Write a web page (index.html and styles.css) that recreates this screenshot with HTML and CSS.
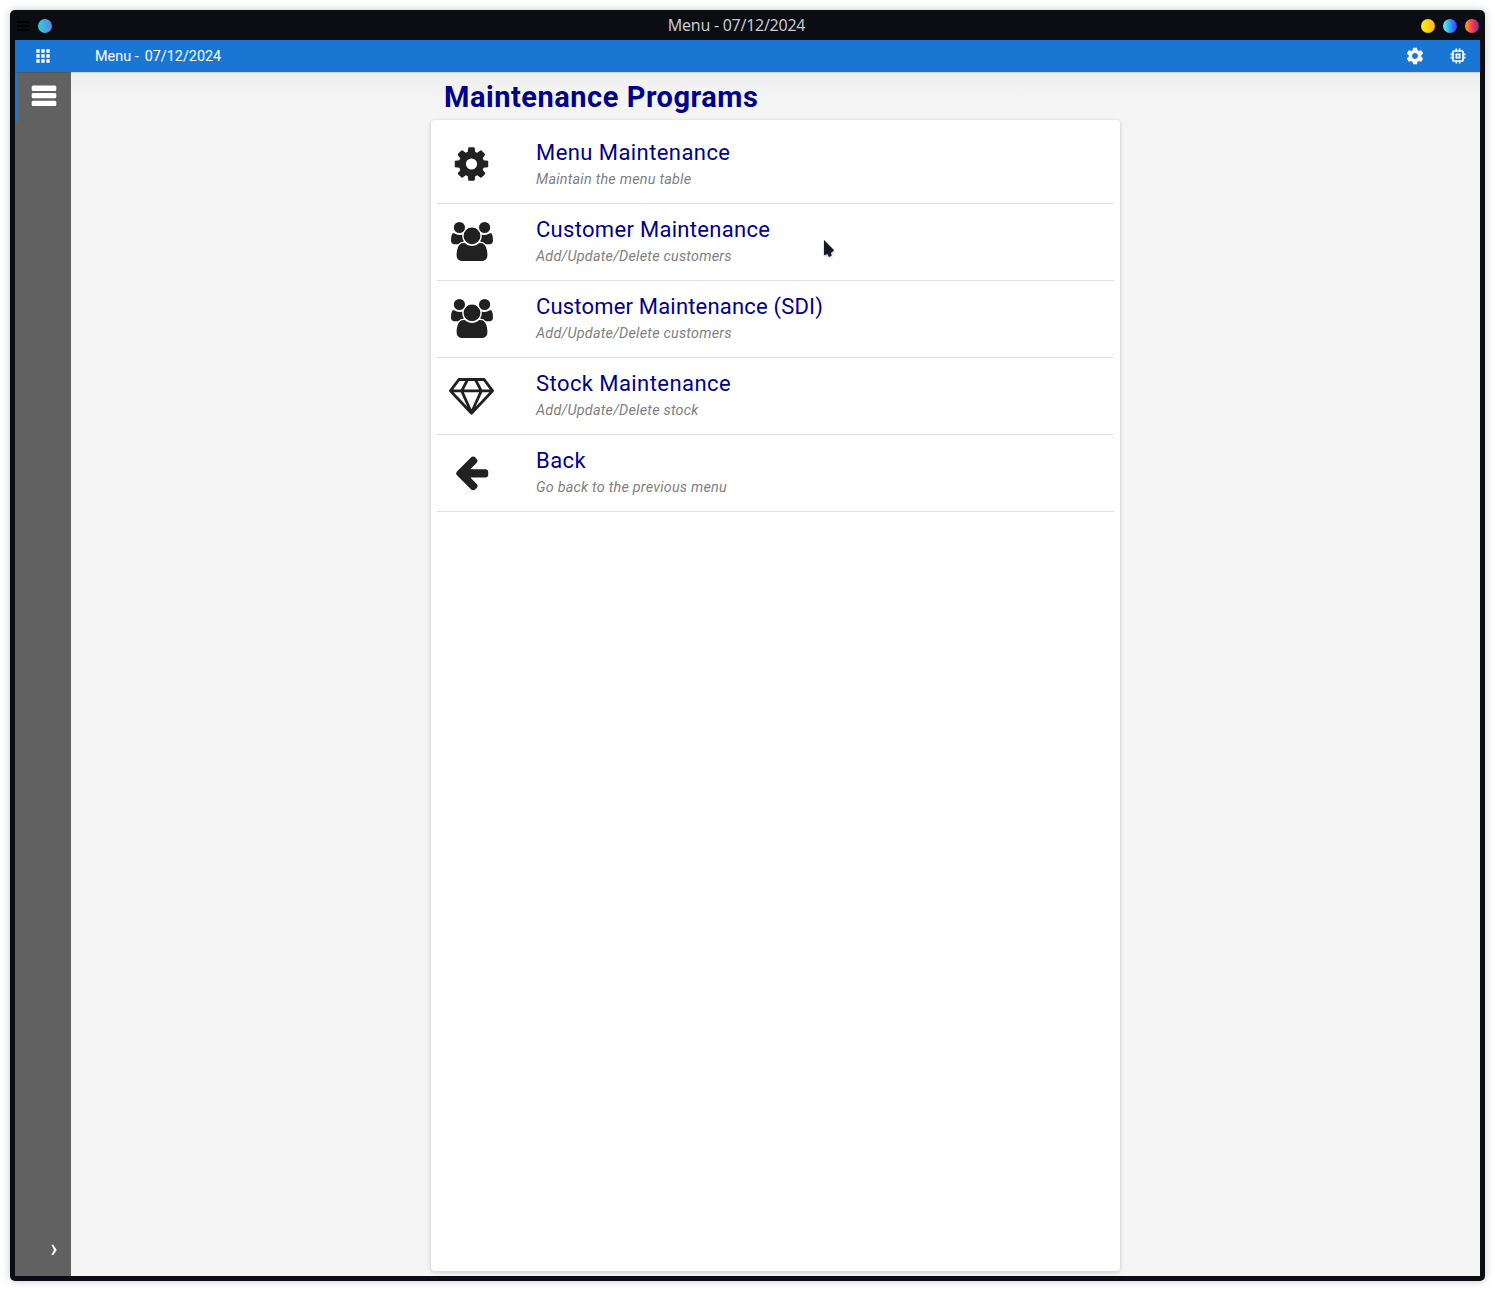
FILE: index.html
```html
<!DOCTYPE html>
<html lang="en">
<head>
<meta charset="utf-8">
<title>Menu - 07/12/2024</title>
<link rel="stylesheet" href="styles.css">
</head>
<body>
<svg class="sprite" aria-hidden="true">
  <symbol id="cog" viewBox="0 0 1792 1792"><path d="M1152 896q0-106-75-181t-181-75-181 75-75 181 75 181 181 75 181-75 75-181zm512-109v222q0 12-8 23t-20 13l-185 28q-19 54-39 91 35 50 107 138 10 12 10 25t-9 23q-27 37-99 108t-94 71q-12 0-26-9l-138-108q-44 23-91 38-16 136-29 186-7 28-36 28h-222q-14 0-24.500-8.500t-11.500-21.500l-28-184q-49-16-90-37l-141 107q-10 9-25 9-14 0-25-11-126-114-165-168-7-10-7-23 0-12 8-23 15-21 51-66.500t54-70.500q-27-50-41-99l-183-27q-13-2-21-12.500t-8-23.500v-222q0-12 8-23t19-13l186-28q14-46 39-92-40-57-107-138-10-12-10-24 0-10 9-23 26-36 98.500-107.500t94.500-71.500q13 0 26 10l138 107q44-23 91-38 16-136 29-186 7-28 36-28h222q14 0 24.500 8.500t11.500 21.500l28 184q49 16 90 37l142-107q9-9 24-9 13 0 25 10 129 119 165 170 7 8 7 22 0 12-8 23-15 21-51 66.500t-54 70.500q26 50 41 98l183 28q13 2 21 12.500t8 23.500z"/></symbol>
  <symbol id="users" viewBox="0 0 1920 1792"><path d="M593 896q-162 5-265 128h-134q-82 0-138-40.500t-56-118.500q0-353 124-353 6 0 43.500 21t97.500 42.500 119 21.500q67 0 133-23-5 37-5 66 0 139 81 256zm1071 637q0 120-73 189.500t-194 69.500h-874q-121 0-194-69.500t-73-189.500q0-53 3.500-103.500t14-109 26.500-108.500 43-97.500 62-81 85.500-53.500 111.500-20q10 0 43 21.500t73 48 107 48 135 21.500 135-21.500 107-48 73-48 43-21.500q61 0 111.500 20t85.500 53.500 62 81 43 97.500 26.500 108.500 14 109 3.500 103.500zm-1024-1277q0 106-75 181t-181 75-181-75-75-181 75-181 181-75 181 75 75 181zm704 384q0 159-112.500 271.500t-271.500 112.500-271.500-112.500-112.500-271.500 112.500-271.500 271.500-112.500 271.500 112.500 112.500 271.500zm576 225q0 78-56 118.500t-138 40.500h-134q-103-123-265-128 81-117 81-256 0-29-5-66 66 23 133 23 59 0 119-21.500t97.500-42.500 43.500-21q124 0 124 353zm-128-609q0 106-75 181t-181 75-181-75-75-181 75-181 181-75 181 75 75 181z"/></symbol>
  <symbol id="diamond" viewBox="0 0 2048 1792"><path d="M212 768l623 665-300-665zM1024 1540l349-772h-698zM538 640l204-384h-262l-288 384zM1213 1433l623-665h-323zM683 640h682l-204-384h-274zM1510 640h346l-288-384h-262zM1651 153l384 512q14 18 13 41.500t-17 40.500l-960 1024q-18 20-47 20t-47-20l-960-1024q-16-17-17-40.500t13-41.500l384-512q18-26 51-26h1152q33 0 51 26z"/></symbol>
  <symbol id="arrow-left" viewBox="0 0 1792 1792"><path d="M1664 896v128q0 53-32.500 90.500t-84.500 37.500h-704l293 294q38 36 38 90t-38 90l-75 76q-37 37-90 37-52 0-91-37l-651-652q-37-37-37-90 0-52 37-91l651-650q38-38 91-38 52 0 90 38l75 74q38 38 38 91t-38 91l-293 293h704q52 0 84.500 37.500t32.500 90.500z"/></symbol>
</svg>

<div class="window">
  <header class="titlebar">
    <div class="title-left">
      <svg class="burger" viewBox="0 0 12 10"><path d="M0 0h12v2H0zM0 4h12v2H0zM0 8h12v2H0z"/></svg>
      <span class="dot dot-app"></span>
    </div>
    <div class="window-title">Menu - 07/12/2024</div>
    <div class="title-right">
      <span class="dot dot-min"></span>
      <span class="dot dot-max"></span>
      <span class="dot dot-close"></span>
    </div>
  </header>

  <nav class="appbar">
    <svg class="app-icon apps" viewBox="0 0 24 24"><path d="M4 8h4V4H4v4zm6 12h4v-4h-4v4zm-6 0h4v-4H4v4zm0-6h4v-4H4v4zm6 0h4v-4h-4v4zm6-10v4h4V4h-4zm-6 4h4V4h-4v4zm6 6h4v-4h-4v4zm0 6h4v-4h-4v4z"/></svg>
    <span class="appbar-title"><span>Menu -</span><span>07/12/2024</span></span>
    <svg class="app-icon settings" viewBox="0 0 24 24"><path d="M19.430 12.980c.04-.32.07-.64.07-.98s-.03-.66-.07-.98l2.110-1.650c.19-.15.24-.42.12-.64l-2-3.460c-.12-.22-.39-.3-.61-.22l-2.490 1c-.52-.4-1.080-.73-1.690-.98l-.38-2.650C14.460 2.180 14.250 2 14 2h-4c-.25 0-.46.18-.49.42l-.38 2.650c-.61.25-1.170.59-1.690.98l-2.490-1c-.23-.09-.49 0-.61.22l-2 3.460c-.13.22-.07.49.12.64l2.110 1.650c-.04.32-.07.65-.07.98s.03.66.07.98l-2.110 1.650c-.19.15-.24.42-.12.64l2 3.460c.12.22.39.3.61.22l2.490-1c.52.4 1.080.73 1.690.98l.38 2.650c.03.24.24.42.49.42h4c.25 0 .46-.18.49-.42l.38-2.650c.61-.25 1.170-.59 1.690-.98l2.490 1c.23.09.49 0 .61-.22l2-3.460c.12-.22.07-.49-.12-.64l-2.110-1.650zM12 15.500c-1.930 0-3.500-1.570-3.500-3.500s1.570-3.500 3.500-3.500 3.500 1.570 3.500 3.500-1.570 3.500-3.500 3.500z"/></svg>
    <svg class="app-icon" viewBox="0 0 24 24"><path d="M15 9H9v6h6V9zm-2 4h-2v-2h2v2zm8-2V9h-2V7c0-1.100-.9-2-2-2h-2V3h-2v2h-2V3H9v2H7c-1.100 0-2 .9-2 2v2H3v2h2v2H3v2h2v2c0 1.100.9 2 2 2h2v2h2v-2h2v2h2v-2h2c1.100 0 2-.9 2-2v-2h2v-2h-2v-2h2zm-4 6H7V7h10v10z"/></svg>
  </nav>

  <div class="body">
    <aside class="sidebar">
      <div class="side-item">
        <svg class="bars" viewBox="0 0 26 22"><rect x="0.700" y="0.500" width="24.600" height="5.500" rx="1.500"/><rect x="0.700" y="8" width="24.600" height="5.300" rx="1.500"/><rect x="0.700" y="15.800" width="24.600" height="5.300" rx="1.500"/></svg>
      </div>
      <svg class="expand" viewBox="0 0 6 12"><path d="M.4.800h1.900L5.700 5.900 2.300 11H.4L3 5.900z"/></svg>
    </aside>

    <main class="content">
      <h1>Maintenance Programs</h1>
      <ul class="card">
        <li class="row">
          <span class="row-icon"><svg width="39" height="40"><use href="#cog"/></svg></span>
          <div class="row-text"><div class="name">Menu Maintenance</div><div class="desc">Maintain the menu table</div></div>
        </li>
        <li class="row">
          <span class="row-icon"><svg width="42" height="41"><use href="#users"/></svg></span>
          <div class="row-text"><div class="name name-long">Customer Maintenance</div><div class="desc">Add/Update/Delete customers</div></div>
        </li>
        <li class="row">
          <span class="row-icon"><svg width="42" height="41"><use href="#users"/></svg></span>
          <div class="row-text"><div class="name name-longest">Customer Maintenance (SDI)</div><div class="desc">Add/Update/Delete customers</div></div>
        </li>
        <li class="row">
          <span class="row-icon"><svg width="45" height="40"><use href="#diamond"/></svg></span>
          <div class="row-text"><div class="name">Stock Maintenance</div><div class="desc">Add/Update/Delete stock</div></div>
        </li>
        <li class="row">
          <span class="row-icon"><svg width="39" height="40"><use href="#arrow-left"/></svg></span>
          <div class="row-text"><div class="name">Back</div><div class="desc">Go back to the previous menu</div></div>
        </li>
      </ul>
    </main>
  </div>
</div>
<svg class="cursor" viewBox="0 0 12 20"><path d="M1 1L11.200 11.200 7.800 14 8.800 16.600 6 18 4.500 15 1 16.300z"/></svg>
</body>
</html>
```
FILE: styles.css
```css
* { box-sizing: border-box; }
body {
  margin: 0;
  height: 1291px;
  padding: 10px;
  background: #fff;
  font-family: Roboto, "Liberation Sans", sans-serif;
  overflow: hidden;
}
.sprite { display: none; }
.window {
  display: flex;
  flex-direction: column;
  width: 1475px;
  height: 1271px;
  padding: 0 5px 5px;
  border-radius: 5px;
  background: #0c0d13;
  box-shadow: 0 0 8px rgba(0, 0, 0, .22);
}
.titlebar {
  display: grid;
  grid-template-columns: 1fr auto 1fr;
  align-items: center;
  flex: none;
  height: 30px;
}
.title-left, .title-right { display: flex; align-items: center; gap: 8px; padding-top: 2px; }
.title-left { padding-left: 2px; gap: 9px; }
.title-right { justify-content: flex-end; padding-right: 1px; }
.burger { width: 12px; height: 10px; fill: #020203; }
.dot { width: 14px; height: 14px; border-radius: 50%; }
.dot-app { background: linear-gradient(90deg, #35c9dc, #5b86e5); }
.dot-min { background: linear-gradient(90deg, #f9ee0a, #fbb034); }
.dot-max { background: linear-gradient(90deg, #72efdd, #2ba6ff 50%, #4a2cf5); }
.dot-close { background: linear-gradient(90deg, #fda52b, #f83d55 50%, #78339b); }
.window-title {
  font: 16px/30px "Noto Sans", sans-serif;
  letter-spacing: -.27px;
  color: #c5c8d0;
  margin-right: 22px;
  white-space: nowrap;
}
.appbar {
  position: relative;
  z-index: 1;
  display: flex;
  align-items: center;
  flex: none;
  height: 32px;
  padding: 0 11.6px 0 18px;
  background: #1976d2;
  color: #fff;
  box-shadow: 0 1px 1px rgba(0, 0, 0, .1);
}
.app-icon { width: 20px; height: 20px; fill: #fff; }
.settings { margin-left: auto; margin-right: 23px; }
.appbar-title { display: flex; gap: 6px; margin-left: 42px; font-size: 14.4px; white-space: nowrap; }
.body { display: flex; flex: 1; min-height: 0; }
.sidebar {
  display: flex;
  flex-direction: column;
  justify-content: space-between;
  width: 56px;
  background: #616161;
}
.side-item { height: 50px; border-left: 3px solid #1976d2; padding: 13px 0 0 13px; }
.bars { display: block; width: 26px; height: 22px; fill: #fff; }
.expand { width: 6px; height: 12px; margin: 0 0 20px 36px; fill: #fff; }
.content {
  display: flex;
  flex-direction: column;
  align-items: center;
  flex: 1;
  padding-bottom: 5px;
  background: linear-gradient(#efefef, #f5f5f5 30px);
}
h1 {
  width: 689px;
  height: 48px;
  margin: 0;
  padding-left: 13px;
  font-size: 29px;
  line-height: 50px;
  letter-spacing: .53px;
  font-weight: 700;
  color: #00008b;
}
.card {
  flex: 1;
  width: 689px;
  margin: 0;
  padding: 7px 6px;
  list-style: none;
  background: #fff;
  border-radius: 4px;
  box-shadow: 0 1px 4px rgba(0, 0, 0, .2);
}
.row { display: flex; height: 77px; border-bottom: 1px solid #e0e0e0; }
.row-icon { display: flex; justify-content: center; width: 69px; padding-top: 17px; fill: #212121; }
.row-text { padding: 12px 0 0 30px; white-space: nowrap; }
.name { font-size: 22px; line-height: 28px; letter-spacing: .43px; color: #00008b; }
.name-long { letter-spacing: .3px; }
.name-longest { letter-spacing: .18px; }
.desc { font-size: 14.4px; line-height: 25px; letter-spacing: .22px; font-style: italic; color: #808080; }
.cursor {
  position: absolute;
  left: 823px;
  top: 239px;
  width: 12px;
  height: 20px;
  fill: #161925;
  overflow: visible;
  filter: drop-shadow(0 1px 1px rgba(0, 0, 0, .3));
}
```
